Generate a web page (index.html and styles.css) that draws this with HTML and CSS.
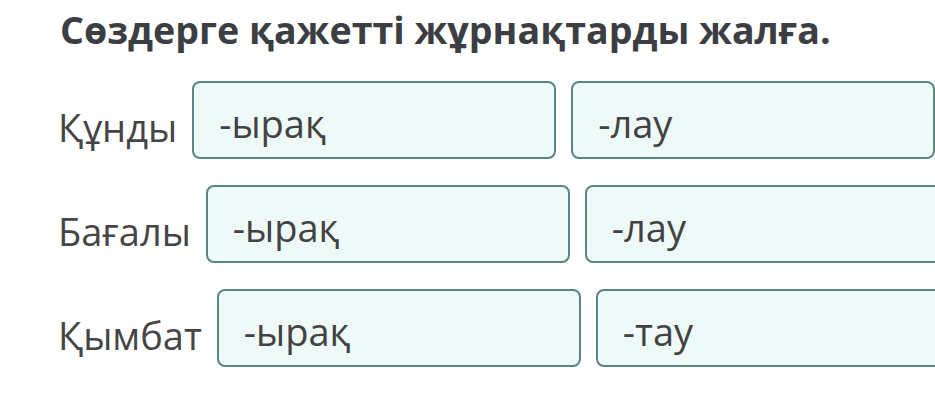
FILE: index.html
```html
<!DOCTYPE html>
<html lang="kk">
<head>
<meta charset="utf-8">
<link rel="stylesheet" href="styles.css">
</head>
<body>
<main class="task">
  <h1 class="title">Сөздерге қажетті жұрнақтарды жалға.</h1>
  <div class="rows">
    <div class="row">
      <span class="label">Құнды</span>
      <div class="option">-ырақ</div>
      <div class="option">-лау</div>
    </div>
    <div class="row">
      <span class="label">Бағалы</span>
      <div class="option">-ырақ</div>
      <div class="option">-лау</div>
    </div>
    <div class="row">
      <span class="label">Қымбат</span>
      <div class="option">-ырақ</div>
      <div class="option">-тау</div>
    </div>
  </div>
</main>
</body>
</html>
```
FILE: styles.css
```css
html, body {
  margin: 0;
  padding: 0;
  background: #ffffff;
  overflow: hidden;
}
body {
  width: 935px;
  height: 404px;
  font-family: "Open Sans", "Noto Sans", sans-serif;
}
.task {
  padding: 4px 0 0 58px;
}
.title {
  margin: 0 0 26px 2px;
  font-size: 37.6px;
  font-weight: 700;
  line-height: 51px;
  color: #3b3e43;
  white-space: nowrap;
}
.rows {
  display: flex;
  flex-direction: column;
  gap: 26px;
}
.row {
  display: flex;
  align-items: flex-start;
  white-space: nowrap;
}
.label {
  margin-top: 20px;
  margin-right: 15px;
  font-size: 38px;
  line-height: 52px;
  color: #454545;
}
.option {
  flex: 0 0 auto;
  box-sizing: border-box;
  width: 364px;
  height: 78px;
  margin-right: 15px;
  padding: 14px 0 0 25px;
  border: 2px solid #578782;
  border-radius: 8px;
  background: #eefaf7;
  font-size: 38px;
  line-height: 52px;
  color: #424242;
}
```
